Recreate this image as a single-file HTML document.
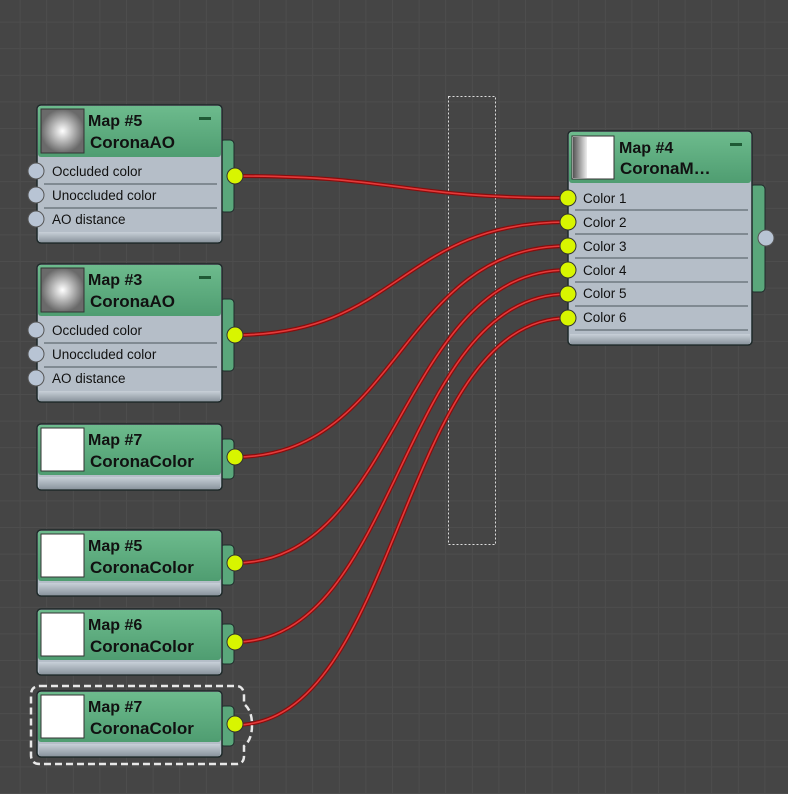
<!DOCTYPE html>
<html><head><meta charset="utf-8"><style>
html,body{margin:0;padding:0;background:#444;}
svg{display:block;font-family:"Liberation Sans",sans-serif;}
</style></head><body>
<svg width="788" height="794" viewBox="0 0 788 794" xmlns="http://www.w3.org/2000/svg">
<defs>
<pattern id="grid" x="-7" y="-5" width="26.6" height="26.6" patternUnits="userSpaceOnUse">
<rect width="26.6" height="26.6" fill="#454545"/>
<rect width="1" height="26.6" fill="#4d4d4d"/>
<rect width="26.6" height="1" fill="#4d4d4d"/>
</pattern>
<linearGradient id="hdr" x1="0" y1="0" x2="0" y2="1"><stop offset="0" stop-color="#6dbb8d"/><stop offset="1" stop-color="#4f9d71"/></linearGradient>
<linearGradient id="bot" x1="0" y1="0" x2="0" y2="1"><stop offset="0" stop-color="#c8d0d8"/><stop offset="1" stop-color="#8c969f"/></linearGradient>
<radialGradient id="ao"><stop offset="0" stop-color="#fff"/><stop offset="1" stop-color="#6a6a6a"/></radialGradient>
<linearGradient id="m4" x1="0" y1="0" x2="1" y2="0"><stop offset="0" stop-color="#555"/><stop offset="1" stop-color="#eee"/></linearGradient>
<g id="wires">
<path d="M235,176 C400,176 400,198 568,198"/>
<path d="M235,335 C400,335 400,222 568,222"/>
<path d="M235,457 C400,457 400,246 568,246"/>
<path d="M235,563 C400,563 400,270 568,270"/>
<path d="M235,642 C400,642 400,294 568,294"/>
<path d="M235,725 C400,725 400,318 568,318"/>
</g>
</defs>
<rect width="788" height="794" fill="url(#grid)"/>
<rect x="448.5" y="96.5" width="47" height="448" fill="none" stroke="#ddd" stroke-width="1" stroke-dasharray="2 2"/>

<use href="#wires" fill="none" stroke="#8a0c0c" stroke-width="4"/>
<use href="#wires" fill="none" stroke="#e43a3a" stroke-width="1.6"/>

<g>
<rect x="220" y="140" width="14" height="72" rx="4" fill="#5aa77b" stroke="#1e2a2a"/>
<rect x="37" y="105" width="185" height="138" rx="4" fill="#b5bec8" stroke="#1e2a2a" stroke-width="1.5"/>
<rect x="38" y="106" width="183" height="51" rx="3" fill="url(#hdr)"/>
<rect x="41" y="109" width="43" height="44" fill="url(#ao)" stroke="#333"/>
<rect x="199" y="117" width="12" height="3" fill="#1f5a35"/>
<text x="88" y="126" font-size="16" font-weight="bold" fill="#111">Map #5</text>
<text x="90" y="148" font-size="17" font-weight="bold" fill="#111">CoronaAO</text>
<line x1="44" y1="184" x2="217" y2="184" stroke="#6e7880" stroke-width="1.5"/>
<line x1="44" y1="208" x2="217" y2="208" stroke="#6e7880" stroke-width="1.5"/>
<text x="52" y="176" font-size="13.5" fill="#111">Occluded color</text>
<text x="52" y="200" font-size="13.5" fill="#111">Unoccluded color</text>
<text x="52" y="224" font-size="13.5" fill="#111">AO distance</text>
<rect x="39" y="232" width="181" height="10" fill="url(#bot)"/>
<circle cx="36" cy="171" r="8" fill="#b8c4d4" stroke="#555"/>
<circle cx="36" cy="195" r="8" fill="#b8c4d4" stroke="#555"/>
<circle cx="36" cy="219" r="8" fill="#b8c4d4" stroke="#555"/>
<circle cx="235" cy="176" r="8" fill="#d8f500" stroke="#333"/>
</g>

<g transform="translate(0,159)">
<rect x="220" y="140" width="14" height="72" rx="4" fill="#5aa77b" stroke="#1e2a2a"/>
<rect x="37" y="105" width="185" height="138" rx="4" fill="#b5bec8" stroke="#1e2a2a" stroke-width="1.5"/>
<rect x="38" y="106" width="183" height="51" rx="3" fill="url(#hdr)"/>
<rect x="41" y="109" width="43" height="44" fill="url(#ao)" stroke="#333"/>
<rect x="199" y="117" width="12" height="3" fill="#1f5a35"/>
<text x="88" y="126" font-size="16" font-weight="bold" fill="#111">Map #3</text>
<text x="90" y="148" font-size="17" font-weight="bold" fill="#111">CoronaAO</text>
<line x1="44" y1="184" x2="217" y2="184" stroke="#6e7880" stroke-width="1.5"/>
<line x1="44" y1="208" x2="217" y2="208" stroke="#6e7880" stroke-width="1.5"/>
<text x="52" y="176" font-size="13.5" fill="#111">Occluded color</text>
<text x="52" y="200" font-size="13.5" fill="#111">Unoccluded color</text>
<text x="52" y="224" font-size="13.5" fill="#111">AO distance</text>
<rect x="39" y="232" width="181" height="10" fill="url(#bot)"/>
<circle cx="36" cy="171" r="8" fill="#b8c4d4" stroke="#555"/>
<circle cx="36" cy="195" r="8" fill="#b8c4d4" stroke="#555"/>
<circle cx="36" cy="219" r="8" fill="#b8c4d4" stroke="#555"/>
<circle cx="235" cy="176" r="8" fill="#d8f500" stroke="#333"/>
</g>

<g>
<rect x="220" y="439" width="14" height="40" rx="4" fill="#5aa77b" stroke="#1e2a2a"/>
<rect x="37" y="424" width="185" height="66" rx="4" fill="#b5bec8" stroke="#1e2a2a" stroke-width="1.5"/>
<rect x="38" y="425" width="183" height="50" rx="3" fill="url(#hdr)"/>
<rect x="41" y="428" width="43" height="43" fill="#fff" stroke="#333"/>
<text x="88" y="445" font-size="16" font-weight="bold" fill="#111">Map #7</text>
<text x="90" y="467" font-size="17" font-weight="bold" fill="#111">CoronaColor</text>
<rect x="39" y="477" width="181" height="12" fill="url(#bot)"/>
<circle cx="235" cy="457" r="8" fill="#d8f500" stroke="#333"/>
</g>
<g transform="translate(0,106)">
<rect x="220" y="439" width="14" height="40" rx="4" fill="#5aa77b" stroke="#1e2a2a"/>
<rect x="37" y="424" width="185" height="66" rx="4" fill="#b5bec8" stroke="#1e2a2a" stroke-width="1.5"/>
<rect x="38" y="425" width="183" height="50" rx="3" fill="url(#hdr)"/>
<rect x="41" y="428" width="43" height="43" fill="#fff" stroke="#333"/>
<text x="88" y="445" font-size="16" font-weight="bold" fill="#111">Map #5</text>
<text x="90" y="467" font-size="17" font-weight="bold" fill="#111">CoronaColor</text>
<rect x="39" y="477" width="181" height="12" fill="url(#bot)"/>
<circle cx="235" cy="457" r="8" fill="#d8f500" stroke="#333"/>
</g>
<g transform="translate(0,185)">
<rect x="220" y="439" width="14" height="40" rx="4" fill="#5aa77b" stroke="#1e2a2a"/>
<rect x="37" y="424" width="185" height="66" rx="4" fill="#b5bec8" stroke="#1e2a2a" stroke-width="1.5"/>
<rect x="38" y="425" width="183" height="50" rx="3" fill="url(#hdr)"/>
<rect x="41" y="428" width="43" height="43" fill="#fff" stroke="#333"/>
<text x="88" y="445" font-size="16" font-weight="bold" fill="#111">Map #6</text>
<text x="90" y="467" font-size="17" font-weight="bold" fill="#111">CoronaColor</text>
<rect x="39" y="477" width="181" height="12" fill="url(#bot)"/>
<circle cx="235" cy="457" r="8" fill="#d8f500" stroke="#333"/>
</g>
<g transform="translate(0,267)">
<rect x="220" y="439" width="14" height="40" rx="4" fill="#5aa77b" stroke="#1e2a2a"/>
<rect x="37" y="424" width="185" height="66" rx="4" fill="#b5bec8" stroke="#1e2a2a" stroke-width="1.5"/>
<rect x="38" y="425" width="183" height="50" rx="3" fill="url(#hdr)"/>
<rect x="41" y="428" width="43" height="43" fill="#fff" stroke="#333"/>
<text x="88" y="445" font-size="16" font-weight="bold" fill="#111">Map #7</text>
<text x="90" y="467" font-size="17" font-weight="bold" fill="#111">CoronaColor</text>
<rect x="39" y="477" width="181" height="12" fill="url(#bot)"/>
<circle cx="235" cy="457" r="8" fill="#d8f500" stroke="#333"/>
</g>
<path d="M40,686 H236 Q244,686 244,696 V704 Q252,710 252,725 Q252,740 244,746 V756 Q244,764 236,764 H40 Q31,764 31,755 V695 Q31,686 40,686 Z" fill="none" stroke="#e8e8e8" stroke-width="2.5" stroke-dasharray="7 4"/>

<g>
<rect x="750" y="185" width="15" height="107" rx="4" fill="#5aa77b" stroke="#1e2a2a"/>
<rect x="568" y="131" width="184" height="214" rx="4" fill="#b5bec8" stroke="#1e2a2a" stroke-width="1.5"/>
<rect x="569" y="132" width="182" height="51" rx="3" fill="url(#hdr)"/>
<rect x="572" y="136" width="42" height="43" fill="#fff" stroke="#333"/>
<rect x="573" y="137" width="14" height="41" fill="url(#m4)"/>
<rect x="730" y="143" width="12" height="3" fill="#1f5a35"/>
<text x="619" y="153" font-size="16" font-weight="bold" fill="#111">Map #4</text>
<text x="620" y="174" font-size="17" font-weight="bold" fill="#111">CoronaM…</text>
<g stroke="#6e7880" stroke-width="1.5">
<line x1="575" y1="210" x2="748" y2="210"/><line x1="575" y1="234" x2="748" y2="234"/>
<line x1="575" y1="258" x2="748" y2="258"/><line x1="575" y1="282" x2="748" y2="282"/>
<line x1="575" y1="306" x2="748" y2="306"/><line x1="575" y1="330" x2="748" y2="330"/>
</g>
<g font-size="13.5" fill="#111">
<text x="583" y="203">Color 1</text><text x="583" y="227">Color 2</text>
<text x="583" y="251">Color 3</text><text x="583" y="275">Color 4</text>
<text x="583" y="298">Color 5</text><text x="583" y="322">Color 6</text>
</g>
<rect x="570" y="334" width="180" height="10" fill="url(#bot)"/>
<g fill="#d8f500" stroke="#333">
<circle cx="568" cy="198" r="8"/><circle cx="568" cy="222" r="8"/>
<circle cx="568" cy="246" r="8"/><circle cx="568" cy="270" r="8"/>
<circle cx="568" cy="294" r="8"/><circle cx="568" cy="318" r="8"/>
</g>
<circle cx="766" cy="238" r="8" fill="#b8c4d4" stroke="#555"/>
</g>
</svg>
</body></html>
